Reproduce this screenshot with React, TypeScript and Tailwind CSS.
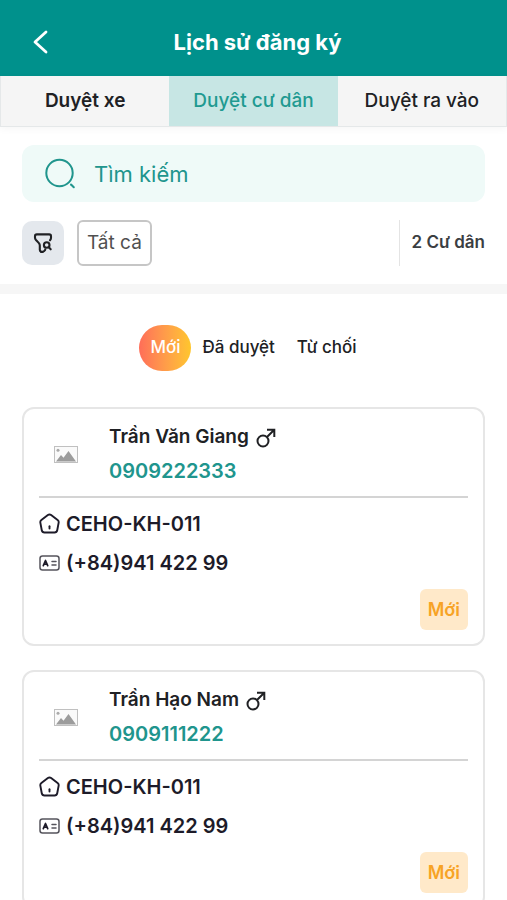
import { useState } from "react";

const tabs = ["Duyệt xe", "Duyệt cư dân", "Duyệt ra vào"];
const statuses = ["Mới", "Đã duyệt", "Từ chối"];

const residents = [
  { name: "Trần Văn Giang", phone: "0909222333", unit: "CEHO-KH-011", idNumber: "(+84)941 422 99", status: "Mới" },
  { name: "Trần Hạo Nam", phone: "0909111222", unit: "CEHO-KH-011", idNumber: "(+84)941 422 99", status: "Mới" },
];

function BackIcon() {
  return (
    <svg width="16" height="24" viewBox="0 0 16 24" fill="none" stroke="currentColor" strokeWidth="2.8" strokeLinecap="round" strokeLinejoin="round">
      <path d="M14 2 3 12l11 10" />
    </svg>
  );
}

function SearchIcon() {
  return (
    <svg width="32" height="32" viewBox="0 0 32 32" fill="none" stroke="currentColor" strokeWidth="2" strokeLinecap="round">
      <circle cx="15.500" cy="15" r="13.200" />
      <path d="m27 26.500 2.800 2.800" />
    </svg>
  );
}

function FilterIcon() {
  return (
    <svg width="20" height="22" viewBox="0 0 20 22" fill="none" stroke="currentColor" strokeWidth="2.100" strokeLinecap="round" strokeLinejoin="round">
      <path d="M8 19.700c-.8-.4-1.200-1-1.200-1.900v-4.300c0-1-.4-1.800-1.100-2.600L3 8C2.300 7.200 2 6.500 2 5.700V4.200c0-1.100.7-1.800 1.800-1.800h12.400c1.100 0 1.800.7 1.800 1.800v1.600c0 1-.4 1.800-1 2.500" />
      <path d="M8 19.700c.8.400 1.600.3 2.400-.2l1-.7c.5-.4.8-.9.900-1.500" />
      <circle cx="13.700" cy="13" r="2.800" />
      <path d="m16 15.600 1.700 1.700" />
    </svg>
  );
}

function MaleIcon() {
  return (
    <svg width="20" height="20" viewBox="0 0 20 20" fill="none" stroke="currentColor" strokeWidth="2">
      <circle cx="7" cy="13" r="5.500" />
      <path d="M11 9 18 2M11 1.800h7.300V9" />
    </svg>
  );
}

function PhotoIcon() {
  return (
    <svg width="24" height="17" viewBox="0 0 24 17" fill="none">
      <rect x="0.500" y="0.500" width="23" height="16" fill="#fafafa" stroke="#c0c0c0" />
      <circle cx="4" cy="4.300" r="1.500" fill="#aaa" />
      <path d="M2 15.500 7 9l2.500 2.700L14.500 5l7.500 10.500Z" fill="#9c9c9c" />
    </svg>
  );
}

function HomeIcon() {
  return (
    <svg width="21" height="21" viewBox="0 0 22 22" fill="none" stroke="currentColor" strokeWidth="2" strokeLinecap="round" strokeLinejoin="round">
      <path d="M9.300 2.100 2.500 7.400c-.9.700-1.300 1.600-1.100 2.700l1.500 8c.3 1.500 1.300 2.300 2.800 2.300h10.600c1.500 0 2.500-.8 2.800-2.300l1.500-8c.2-1.100-.2-2-1.100-2.700l-6.800-5.300c-1.100-.8-2.300-.8-3.400 0Z" />
      <path d="M11 13.800v2.500" />
    </svg>
  );
}

function IdCardIcon() {
  return (
    <svg width="21" height="16" viewBox="0 0 21 16" fill="none" strokeLinecap="round" strokeLinejoin="round">
      <rect x="1" y="1" width="19" height="14" rx="2.500" stroke="#55545c" strokeWidth="1.500" />
      <path d="M4.300 10.700 6.500 5.500l2.200 5.200M5.300 9.200h2.400" stroke="currentColor" strokeWidth="1.700" />
      <path d="M13 6.500h4M13 10h4" stroke="#55545c" strokeWidth="1.500" />
    </svg>
  );
}

export default function RegistrationHistory() {
  const [tab, setTab] = useState(1);
  const [status, setStatus] = useState("Mới");
  const [search, setSearch] = useState("");

  return (
    <div className="min-h-screen bg-white font-[Inter,sans-serif] text-[#202124]">
      <header className="grid h-[76px] grid-cols-[44px_1fr_44px] items-center bg-[#00918c] px-5 pt-2 text-white">
        <button type="button" aria-label="Quay lại" className="flex h-10 items-center pl-3">
          <BackIcon />
        </button>
        <h1 className="pl-2 text-center text-[22px] leading-7 font-bold">Lịch sử đăng ký</h1>
      </header>

      <nav className="grid h-[51px] grid-cols-3 border border-t-0 border-[#e5e8e9] bg-[#f5f5f5] shadow-[0_2px_8px_rgba(0,0,0,0.04)]">
        {tabs.map((label, i) => (
          <button
            key={label}
            type="button"
            onClick={() => setTab(i)}
            className={
              i === tab
                ? "bg-[#c7e6e4] text-[19px] font-medium text-[#1f9a91]"
                : i === 0
                  ? "text-[19px] font-semibold"
                  : "text-[19px] font-medium"
            }
          >
            {label}
          </button>
        ))}
      </nav>

      <section className="px-[22px] py-[18px]">
        <label className="flex h-[57px] items-center gap-[18px] rounded-xl bg-[#effaf8] px-[22px] text-[#20958d]">
          <SearchIcon />
          <input
            type="search"
            aria-label="Tìm kiếm"
            placeholder="Tìm kiếm"
            value={search}
            onChange={(e) => setSearch(e.target.value)}
            className="min-w-0 flex-1 bg-transparent text-[22px] leading-8 outline-none placeholder:text-[#20958d]"
          />
        </label>

        <div className="mt-[18px] flex items-center">
          <button type="button" aria-label="Bộ lọc" className="flex h-11 w-[42px] items-center justify-center rounded-[10px] bg-[#e4e8ed]">
            <FilterIcon />
          </button>
          <button type="button" className="ml-[13px] h-[46px] rounded-md border-2 border-[#c6c6c6] px-2 text-[19px] text-[#505050]">
            Tất cả
          </button>
          <p className="ml-auto flex h-[46px] items-center border-l border-[#e4e4e4] pl-3 text-[17px] font-semibold text-[#3b3e42]">
            2 Cư dân
          </p>
        </div>
      </section>

      <div className="h-[10px] bg-[#f6f6f6]" />

      <div className="flex justify-center pt-[31px]">
        {statuses.map((s) => (
          <button
            key={s}
            type="button"
            onClick={() => setStatus(s)}
            className={
              s === status
                ? "h-[46px] rounded-full bg-linear-to-r from-[#ff6d58] to-[#ffc62b] px-[11px] text-[17px] font-medium text-white"
                : "h-[46px] px-[11px] text-[17px] font-medium"
            }
          >
            {s}
          </button>
        ))}
      </div>

      <main className="flex flex-col gap-6 px-[22px] pt-9">
        {residents.map((r) => (
          <article key={r.phone} className="rounded-xl border-2 border-[#e6e6e6] px-[15px] pt-3 pb-[14px]">
            <div className="flex items-center border-b-2 border-[#d4d4d4] pb-[9px]">
              <div className="flex w-[70px] pl-[15px]">
                <PhotoIcon />
              </div>
              <div>
                <h2 className="flex h-[33px] items-center gap-[7px] text-[19px] font-semibold">
                  {r.name}
                  <MaleIcon />
                </h2>
                <a href={`tel:${r.phone}`} className="flex h-[33px] items-center text-[20px] font-semibold text-[#20958d]">
                  {r.phone}
                </a>
              </div>
            </div>
            <p className="mt-[6px] flex h-[39px] items-center gap-[6px] text-[20px] font-semibold text-[#1d1b29]">
              <HomeIcon />
              {r.unit}
            </p>
            <p className="flex h-[39px] items-center gap-[6px] text-[20px] font-semibold text-[#1d1b29]">
              <IdCardIcon />
              {r.idNumber}
            </p>
            <div className="mt-[7px] flex justify-end">
              <span className="flex h-[41px] items-center rounded-md bg-[#ffe9c9] px-2 text-[18px] font-semibold text-[#f7a325]">
                {r.status}
              </span>
            </div>
          </article>
        ))}
      </main>
    </div>
  );
}
